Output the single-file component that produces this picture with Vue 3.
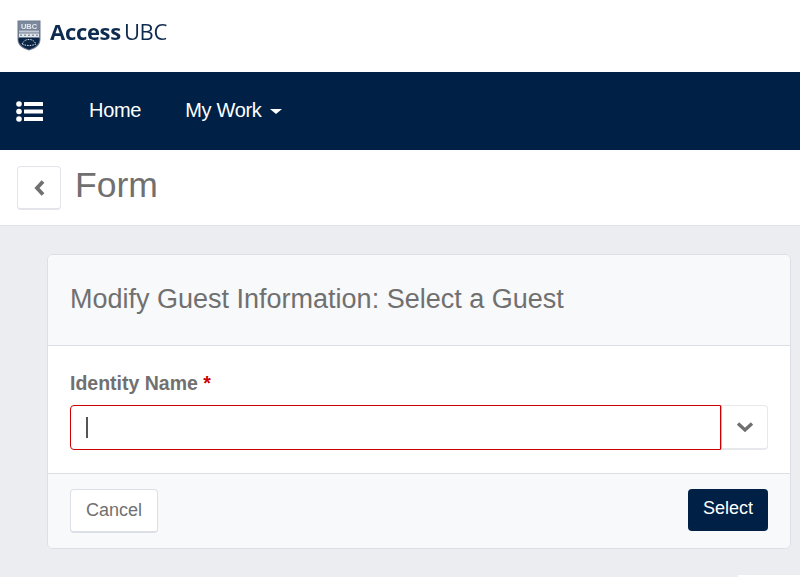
<template>
  <div class="page">
    <header class="brand">
      <svg class="crest" width="24" height="31" viewBox="0 0 24 31">
        <path d="M0.500 0.500H23.500V19C23.500 26 18 29 12 30.500C6 29 0.500 26 0.500 19Z" fill="#6d7b90" />
        <rect x="1.500" y="1.500" width="21" height="8" fill="#7c899c" />
        <text class="crest-text" x="12" y="8.500" text-anchor="middle">UBC</text>
        <rect x="2" y="10.500" width="20" height="2" fill="#c3c9d3" />
        <rect x="2" y="13.500" width="20" height="3.500" fill="#e2e5ea" />
        <path d="M3 15.200H21" stroke="#5f6f86" stroke-width="1" stroke-dasharray="2 2" />
        <path d="M1.500 18H22.500V20C22 25 17 28 12 29.500C7 28 2 25 1.500 20Z" fill="#0b2547" />
        <path d="M5 24C7 20.500 9 19.500 12 19.500C15 19.500 17 20.500 19 24C15 26 9 26 5 24Z" fill="#0b2547" stroke="#dfe3e9" stroke-width="1" stroke-dasharray="1.500 1" />
      </svg>
      <span class="brand-name"><b>Access</b><span class="brand-ubc">UBC</span></span>
    </header>

    <nav class="nav">
      <svg class="menu-icon" width="27" height="21" viewBox="0 0 27 21">
        <g fill="#fff">
          <circle cx="3" cy="3" r="2.800" />
          <circle cx="3" cy="10.500" r="2.800" />
          <circle cx="3" cy="18" r="2.800" />
          <rect x="8" y="1" width="19" height="4" rx="0.500" />
          <rect x="8" y="8.500" width="19" height="4" rx="0.500" />
          <rect x="8" y="16" width="19" height="4" rx="0.500" />
        </g>
      </svg>
      <a class="nav-link home">Home</a>
      <a class="nav-link">My Work<i class="caret"></i></a>
    </nav>

    <div class="title-bar">
      <button class="back-btn">
        <svg width="14" height="20" viewBox="0 0 14 20">
          <path d="M11 3.500L5 10L11 16.500" fill="none" stroke="#707070" stroke-width="3.800" />
        </svg>
      </button>
      <h1>Form</h1>
    </div>

    <main class="content">
      <section class="card">
        <div class="card-head">Modify Guest Information: Select a Guest</div>
        <div class="card-body">
          <label class="field-label">Identity Name <span class="req">*</span></label>
          <div class="combo">
            <div class="combo-input"><i class="cursor"></i></div>
            <button class="combo-btn">
              <svg width="18" height="12" viewBox="0 0 18 12">
                <path d="M2 2.500L9 9L16 2.500" fill="none" stroke="#707070" stroke-width="3.400" />
              </svg>
            </button>
          </div>
        </div>
        <div class="card-foot">
          <button class="btn cancel">Cancel</button>
          <button class="btn select">Select</button>
        </div>
      </section>
      <div class="corner"></div>
    </main>
  </div>
</template>

<script setup>
</script>

<style>
html,
body {
  margin: 0;
  overflow: hidden;
}
</style>

<style scoped>
.page {
  height: 577px;
  overflow: hidden;
  display: flex;
  flex-direction: column;
  font-family: "Liberation Sans", Arial, sans-serif;
  background: #ecedf1;
}

.brand {
  height: 72px;
  background: #fff;
  display: flex;
  align-items: center;
  padding-left: 17px;
  box-sizing: border-box;
}

.crest {
  margin-top: -2px;
  filter: blur(0.3px);
}

.crest-text {
  font-family: "Liberation Sans", Arial, sans-serif;
  font-size: 7.500px;
  font-weight: 700;
  fill: #e6e9ee;
}

.brand-name {
  margin-left: 9px;
  margin-top: -11px;
  font-family: "Open Sans", sans-serif;
  font-size: 22px;
  letter-spacing: -0.3px;
  color: #0d2a4f;
  filter: blur(0.3px);
}

.brand-ubc {
  margin-left: 3px;
}

.nav {
  height: 78px;
  background: #002145;
  display: flex;
  align-items: center;
  padding-left: 16px;
  color: #fff;
}

.menu-icon {
  margin-right: 46px;
}

.nav-link {
  font-size: 20px;
  letter-spacing: -0.3px;
  margin-top: -1px;
}

.home {
  margin-right: 44px;
}

.caret {
  display: inline-block;
  margin-left: 8px;
  vertical-align: middle;
  border-top: 5px solid #fff;
  border-left: 6px solid transparent;
  border-right: 6px solid transparent;
}

.title-bar {
  height: 76px;
  box-sizing: border-box;
  background: #fff;
  border-bottom: 1px solid #e1e3e8;
  display: flex;
  align-items: flex-start;
  padding: 16px 0 0 17px;
}

.back-btn {
  width: 44px;
  height: 44px;
  padding: 0;
  background: #fff;
  border: 1px solid #e3e5ea;
  border-bottom-width: 2px;
  border-radius: 4px;
  display: flex;
  align-items: center;
  justify-content: center;
}

h1 {
  margin: 0 0 0 14px;
  font-size: 35.500px;
  line-height: 38px;
  font-weight: 400;
  color: #707070;
}

.content {
  flex: 1;
  position: relative;
  padding: 28px 9px 0 47px;
}

.card {
  height: 295px;
  box-sizing: border-box;
  background: #fff;
  border: 1px solid #dcdfe5;
  border-radius: 6px;
  overflow: hidden;
  display: flex;
  flex-direction: column;
}

.card-head {
  height: 91px;
  box-sizing: border-box;
  background: #f8f9fb;
  border-bottom: 1px solid #dcdfe5;
  padding: 27px 0 0 22px;
  font-size: 27px;
  line-height: 34px;
  color: #707070;
}

.card-body {
  height: 128px;
  box-sizing: border-box;
  padding: 26px 22px 0 22px;
  border-bottom: 1px solid #dcdfe5;
}

.field-label {
  display: block;
  font-size: 19.500px;
  line-height: 22px;
  font-weight: 700;
  color: #707070;
}

.req {
  color: #cc0000;
}

.combo {
  display: flex;
  margin-top: 11px;
}

.combo-input {
  flex: 1;
  height: 45px;
  box-sizing: border-box;
  border: 1px solid #cc0000;
  border-radius: 4px 0 0 4px;
  padding: 11px 0 0 15px;
}

.cursor {
  display: block;
  width: 2px;
  height: 21px;
  background: #555;
}

.combo-btn {
  width: 47px;
  height: 45px;
  padding: 0 0 0 1px;
  box-sizing: border-box;
  background: #fff;
  border: 1px solid #e6e8ec;
  border-left: 1px solid #f4a6a6;
  border-bottom-width: 2px;
  border-radius: 0 4px 4px 0;
  display: flex;
  align-items: center;
  justify-content: center;
}

.card-foot {
  flex: 1;
  background: #f8f9fb;
  display: flex;
  justify-content: space-between;
  align-items: flex-start;
  padding: 15px 22px 0 22px;
}

.btn {
  font-family: inherit;
  font-size: 18px;
  border-radius: 4px;
  padding: 0;
}

.cancel {
  width: 88px;
  height: 44px;
  background: #fff;
  color: #707070;
  border: 1px solid #dcdfe5;
  border-bottom-width: 2px;
}

.select {
  width: 80px;
  height: 42px;
  padding-bottom: 3px;
  background: #002145;
  color: #fff;
  border: none;
}

.corner {
  position: absolute;
  right: 0;
  bottom: 0;
  width: 62px;
  height: 2px;
  background: #fff;
}
</style>
